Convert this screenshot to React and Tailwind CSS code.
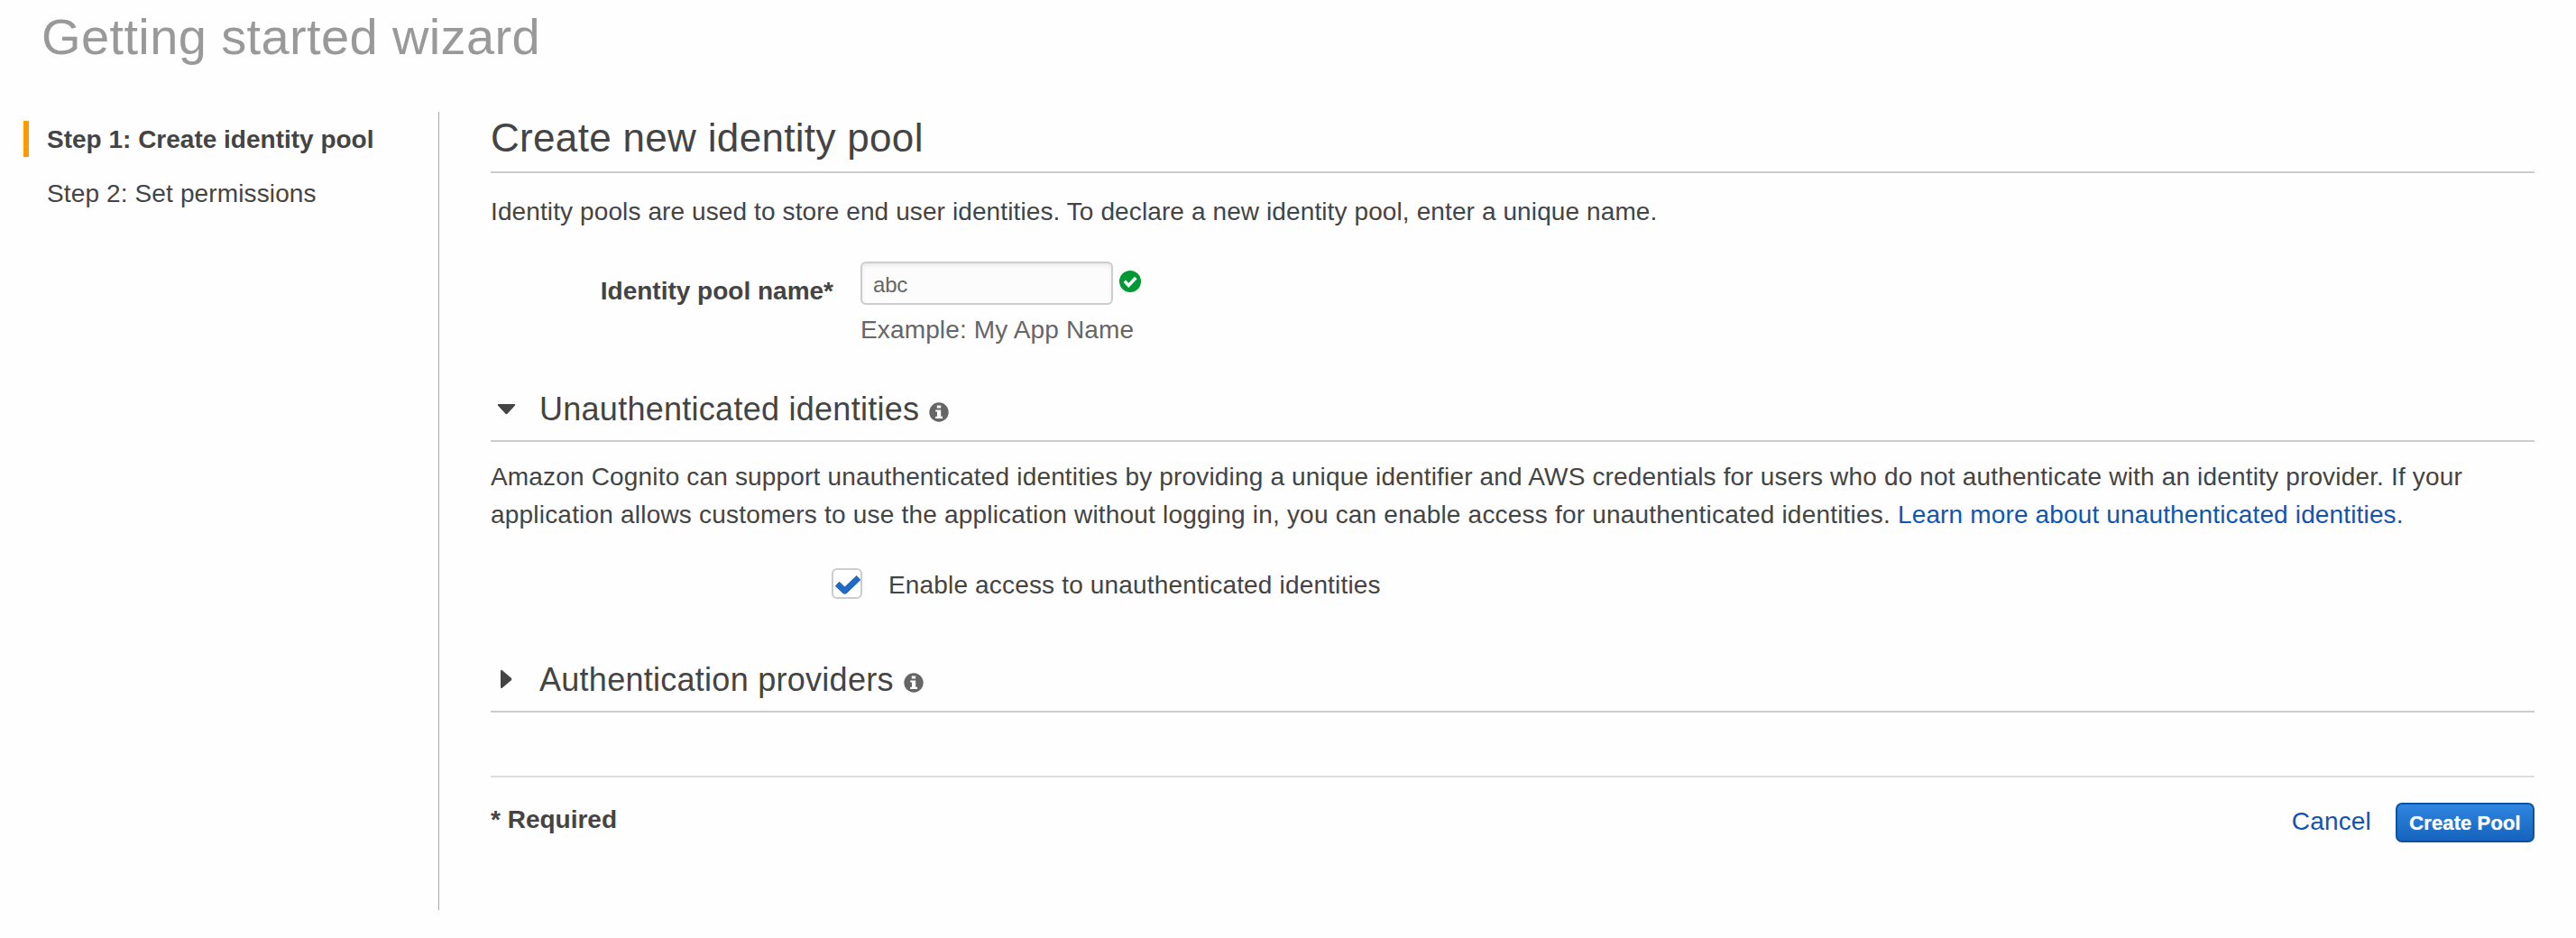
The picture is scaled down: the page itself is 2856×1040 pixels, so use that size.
import React from "react";

function InfoIcon() {
  return (
    <svg viewBox="0 0 22 22" className="h-[22px] w-[22px]">
      <circle cx="11" cy="11" r="10.7" fill="#666" />
      <path d="M8.8 3.4h4.4v3.2H8.8zM7.2 8.4h6v7.4h1.8v2.2H7.2v-2.2H9v-5.2H7.2z" fill="#fff" />
    </svg>
  );
}

function SectionHeader({ open, children }) {
  return (
    <div className="flex h-[61px] border-b-2 border-[#ccc]">
      <div className="w-[54px] shrink-0">
        {open ? (
          <svg viewBox="0 0 22 14" className="mt-[18px] ml-[7px] h-[14px] w-[22px]">
            <path d="M1.6 1h17.8q1.4.2.6 1.4l-8.2 9.2q-1.3 1.2-2.6 0L1 2.400Q.2 1.200 1.600 1z" fill="#444" />
          </svg>
        ) : (
          <svg viewBox="0 0 14 22" className="mt-[13px] ml-[11px] h-[22px] w-[14px]">
            <path d="M0 2.200Q.2.200 1.800 1.200l10 8.500q1.200 1.300 0 2.600l-10 8.500Q.2 21.800 0 19.800z" fill="#444" />
          </svg>
        )}
      </div>
      <h3 className="pt-px text-[36px] leading-[48px] tracking-[0.27px] whitespace-nowrap">{children}</h3>
      <div className="mt-[17px] ml-[11px]">
        <InfoIcon />
      </div>
    </div>
  );
}

export default function App() {
  return (
    <div className="h-[1040px] w-[2856px] overflow-hidden bg-[#fefefe] pt-[9px] font-['Liberation_Sans',Arial,sans-serif] text-[28px] leading-[42px] text-[#444]">
      <h1 className="pl-[46px] text-[56px] leading-[64px] tracking-[0.38px] text-[#999]">Getting started wizard</h1>
      <div className="mt-[51px] flex h-[885px]">
        <nav className="flex w-[486px] shrink-0 flex-col gap-5 pt-2.5 pl-[26px]">
          <div className="h-10 border-l-[6px] border-[#f90] pl-[20px] font-bold">Step 1: Create identity pool</div>
          <div className="h-10 border-l-[6px] border-transparent pl-[20px] tracking-[0.13px]">Step 2: Set permissions</div>
        </nav>
        <main className="w-[2324px] border-l border-[#aaa] pl-[57px]">
          <h2 className="h-[68px] border-b-2 border-[#ccc] pt-px text-[44px] leading-[56px] tracking-[0.32px]">
            Create new identity pool
          </h2>
          <p className="mt-[22px] tracking-[0.107px]">
            Identity pools are used to store end user identities. To declare a new identity pool, enter a unique name.
          </p>
          <div className="mt-[34px] flex gap-[30px]">
            <label htmlFor="pool-name" className="w-[380px] pt-[12px] text-right font-bold">
              Identity pool name*
            </label>
            <div>
              <div className="flex gap-[7px]">
                <input
                  id="pool-name"
                  defaultValue="abc"
                  className="h-12 w-[280px] rounded-[6px] border-2 border-[#ccc] bg-[#fcfcfc] px-3 pt-[3px] text-[24px] tracking-[-0.2px] text-[#666] shadow-[inset_0_3px_4px_rgba(0,0,0,0.07)] outline-none"
                />
                <svg viewBox="0 0 24 24" className="mt-[10px] h-6 w-6">
                  <circle cx="12" cy="12" r="12" fill="#093" />
                  <path d="M5.800 11.800l4.500 4.600 8-8.400" fill="none" stroke="#fff" strokeWidth="3.600" />
                </svg>
              </div>
              <div className="mt-[7px] tracking-[0.14px] text-[#666]">Example: My App Name</div>
            </div>
          </div>
          <div className="mt-[42px]">
            <SectionHeader open>Unauthenticated identities</SectionHeader>
          </div>
          <p className="mt-[18px] tracking-[0.17px] whitespace-nowrap">
            Amazon Cognito can support unauthenticated identities by providing a unique identifier and AWS credentials for
            users who do not authenticate with an identity provider. If your
            <br />
            <span className="tracking-[0.2px]">
              application allows customers to use the application without logging in, you can enable access for
              unauthenticated identities.{" "}
              <a className="tracking-[0.15px] text-[#1155b0]">Learn more about unauthenticated identities.</a>
            </span>
          </p>
          <div className="mt-[38px] ml-[378px] flex h-[34px] gap-[29px]">
            <span className="flex h-[34px] w-[34px] items-center justify-center rounded-[6px] border-2 border-[#ccc] bg-white">
              <svg viewBox="0 0 30 30" className="h-[30px] w-[30px]">
                <path d="M4.200 15.200l8.400 8L28 8.500" fill="none" stroke="#1f6ac6" strokeWidth="6.800" strokeLinejoin="round" />
              </svg>
            </span>
            <span className="pt-0.5 leading-[34px] tracking-[0.165px]">Enable access to unauthenticated identities</span>
          </div>
          <div className="mt-[65px]">
            <SectionHeader>Authentication providers</SectionHeader>
          </div>
          <footer className="mt-[70px] flex items-start border-t-2 border-[#ddd]">
            <span className="mt-[26px] font-bold">* Required</span>
            <a className="mt-[28px] ml-auto tracking-[0.17px] text-[#1155b0]">Cancel</a>
            <button className="mt-7 ml-[27px] h-11 w-[154px] rounded-[7px] border-2 border-[#0a54a3] bg-linear-to-b from-[#2f86e0] to-[#1563bd] pt-px text-[22px] leading-[39px] font-bold tracking-[0.1px] text-white [text-shadow:0_0_1px_rgba(255,255,255,0.7)]">
              Create Pool
            </button>
          </footer>
        </main>
      </div>
    </div>
  );
}
